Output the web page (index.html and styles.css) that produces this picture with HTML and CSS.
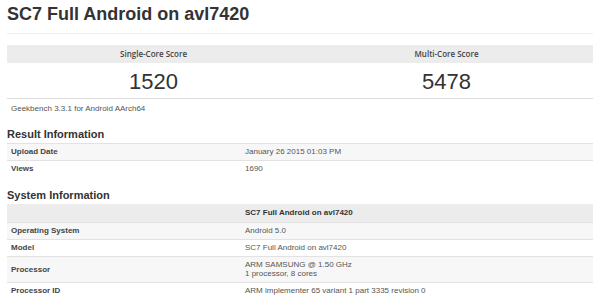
FILE: index.html
```html
<!DOCTYPE html>
<html>
<head>
<meta charset="utf-8">
<link rel="stylesheet" href="styles.css">
</head>
<body>
<div class="page">
  <h1 class="title">SC7 Full Android on avl7420</h1>
  <div class="scores">
    <div class="score-col">
      <div class="score-head">Single-Core Score</div>
      <div class="score-num">1520</div>
    </div>
    <div class="score-col">
      <div class="score-head">Multi-Core Score</div>
      <div class="score-num">5478</div>
    </div>
  </div>
  <div class="note">Geekbench 3.3.1 for Android AArch64</div>

  <h2 class="section result-h">Result Information</h2>
  <table class="info">
    <tr class="odd"><td class="lbl">Upload Date</td><td class="val">January 26 2015 01:03 PM</td></tr>
    <tr><td class="lbl">Views</td><td class="val">1690</td></tr>
  </table>

  <h2 class="section system-h">System Information</h2>
  <table class="info">
    <tr class="head"><td class="lbl"></td><td class="val">SC7 Full Android on avl7420</td></tr>
    <tr class="odd"><td class="lbl">Operating System</td><td class="val">Android 5.0</td></tr>
    <tr><td class="lbl">Model</td><td class="val">SC7 Full Android on avl7420</td></tr>
    <tr class="odd"><td class="lbl">Processor</td><td class="val">ARM SAMSUNG @ 1.50 GHz<br>1 processor, 8 cores</td></tr>
    <tr><td class="lbl">Processor ID</td><td class="val">ARM implementer 65 variant 1 part 3335 revision 0</td></tr>
  </table>
</div>
</body>
</html>
```

FILE: styles.css
```css
html, body {
  margin: 0;
  padding: 0;
  background: #ffffff;
}
body {
  font-family: "Liberation Sans", Arial, sans-serif;
  color: #333;
  overflow: hidden;
}
.page {
  padding: 0 7px;
  width: 586px;
}
.title {
  margin: 3px 0 0;
  font-size: 18px;
  line-height: 22px;
  font-weight: bold;
  color: #333;
  padding-bottom: 8px;
  border-bottom: 1px solid #eeeeee;
}
.scores {
  margin-top: 11px;
  display: grid;
  grid-template-columns: 1fr 1fr;
  border-bottom: 1px solid #dddddd;
}
.score-head {
  background: #ececec;
  height: 18px;
  line-height: 18px;
  text-align: center;
  font-family: "Open Sans", sans-serif;
  font-weight: 600;
  font-size: 8px;
  color: #444;
}
.score-num {
  padding-top: 2px;
  line-height: 33px;
  font-size: 22px;
  text-align: center;
  color: #333;
}
.note {
  padding: 4px 4px 0;
  line-height: 12px;
  font-size: 8px;
  color: #555;
}
.section {
  font-size: 11px;
  line-height: 14px;
  font-weight: bold;
  color: #333;
  margin: 0 0 2px;
}
.result-h { margin-top: 12px; }
.system-h { margin-top: 11px; }
.info {
  width: 586px;
  border-collapse: collapse;
  font-size: 8px;
  line-height: 9px;
}
.info td {
  padding: 3px 4px 4px;
  border-top: 1px solid #e2e2e2;
  vertical-align: middle;
}
.info .lbl {
  width: 226px;
  font-weight: bold;
  color: #444;
}
.info .val {
  color: #555;
}
.info tr.odd td {
  background: #f7f7f7;
}
.info tr.head td {
  background: #ececec;
  border-top: none;
  padding: 4px 4px 5px;
  font-weight: bold;
  color: #333;
}
```
